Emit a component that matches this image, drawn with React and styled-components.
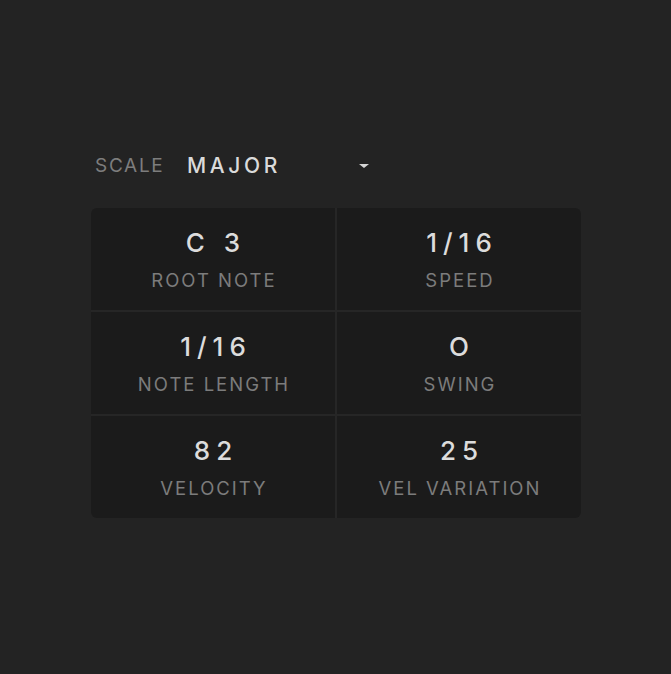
import React from "react";
import styled, { createGlobalStyle } from "styled-components";

const GlobalStyle = createGlobalStyle`
  html, body {
    margin: 0;
    padding: 0;
    background: #232323;
  }
  body {
    font-family: Inter, "Noto Sans", sans-serif;
  }
`;

const Page = styled.div`
  min-height: 674px;
  padding: 150px 0 0 91px;
  box-sizing: border-box;
`;

const Panel = styled.div`
  width: 490px;
  display: flex;
  flex-direction: column;
  gap: 28px;
`;

const ScaleRow = styled.div`
  display: flex;
  align-items: center;
  height: 30px;
  padding-left: 4px;
`;

const ScaleLabel = styled.span`
  font-size: 19px;
  letter-spacing: 1.7px;
  color: #7d7d7d;
  width: 92px;
`;

const Select = styled.div`
  display: flex;
  align-items: center;
  justify-content: space-between;
  width: 182px;
  cursor: pointer;
`;

const SelectValue = styled.span`
  font-size: 21px;
  font-weight: 500;
  letter-spacing: 3.6px;
  color: #dadada;
`;

const Caret = styled.span`
  width: 0;
  height: 0;
  border-left: 5px solid transparent;
  border-right: 5px solid transparent;
  border-top: 4px solid #d6d6d6;
  margin-top: 2px;
`;

const Grid = styled.div`
  display: grid;
  grid-template-columns: 1fr 1fr;
  gap: 2px;
  background: #262626;
  border-radius: 6px;
  overflow: hidden;
`;

const Cell = styled.div`
  height: 102px;
  background: #1b1b1b;
  display: flex;
  flex-direction: column;
  align-items: center;
  justify-content: center;
  gap: 11px;
`;

const Value = styled.div`
  font-size: 26px;
  font-weight: 500;
  letter-spacing: 6px;
  margin-right: -6px;
  line-height: 30px;
  color: #dcdcdc;
  white-space: pre;
`;

const Label = styled.div`
  font-size: 18.5px;
  letter-spacing: 2px;
  margin-right: -2px;
  line-height: 22px;
  color: #7c7c7c;
`;

const params = [
  { value: "C 3", label: "ROOT NOTE" },
  { value: "1/16", label: "SPEED" },
  { value: "1/16", label: "NOTE LENGTH" },
  { value: "O", label: "SWING" },
  { value: "82", label: "VELOCITY" },
  { value: "25", label: "VEL VARIATION" },
];

export default function App() {
  return (
    <>
      <GlobalStyle />
      <Page>
        <Panel>
          <ScaleRow>
            <ScaleLabel>SCALE</ScaleLabel>
            <Select>
              <SelectValue>MAJOR</SelectValue>
              <Caret />
            </Select>
          </ScaleRow>
          <Grid>
            {params.map((p) => (
              <Cell key={p.label}>
                <Value>{p.value}</Value>
                <Label>{p.label}</Label>
              </Cell>
            ))}
          </Grid>
        </Panel>
      </Page>
    </>
  );
}
